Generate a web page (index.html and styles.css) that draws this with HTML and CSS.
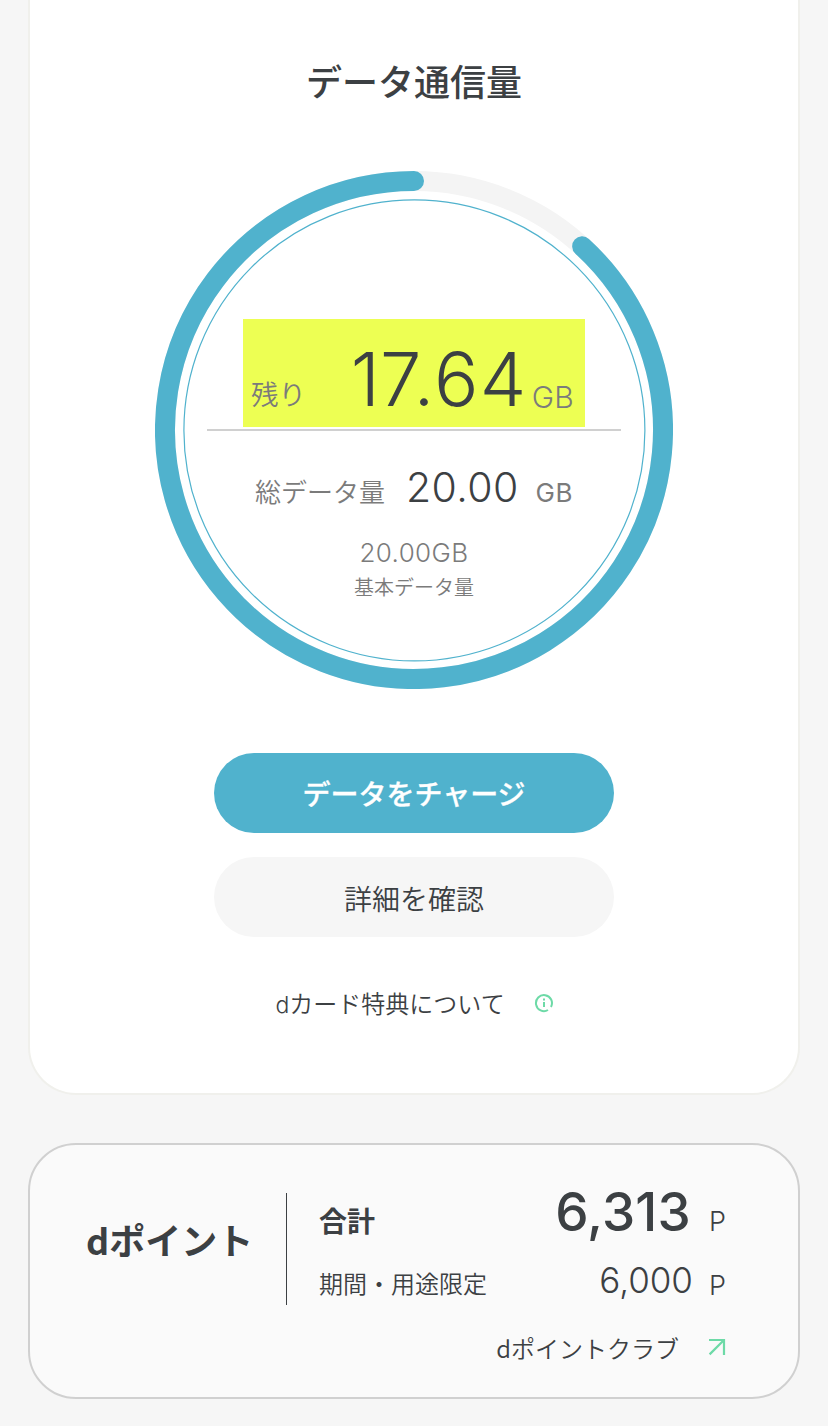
FILE: index.html
```html
<!DOCTYPE html>
<html lang="ja">
<head>
<meta charset="utf-8">
<title>データ通信量</title>
<link rel="stylesheet" href="styles.css">
</head>
<body>
<main class="page">
  <section class="usage-card">
    <h1 class="usage-title">データ通信量</h1>
    <div class="gauge">
      <svg class="gauge-ring" viewBox="0 0 518 518" fill="none">
        <circle cx="259" cy="259" r="249" stroke="#f4f4f4" stroke-width="20"/>
        <circle cx="259.4" cy="259.4" r="230.5" stroke="#50b2cd" stroke-width="1.2"/>
        <path d="M427.15 75.35A249 249 0 1 1 259 10" stroke="#50b2cd" stroke-width="20" stroke-linecap="round"/>
      </svg>
      <div class="gauge-body">
        <div class="remaining">
          <span class="remaining-label">残り</span>
          <span class="remaining-value"><span class="lead-digit">1</span>7.64</span>
          <span class="remaining-unit">GB</span>
        </div>
        <div class="gauge-line"></div>
        <div class="total">
          <span class="total-label">総データ量</span>
          <span class="total-value">20.00</span>
          <span class="total-unit">GB</span>
        </div>
        <div class="base-value"><span>20.00GB</span></div>
        <div class="base-label">基本データ量</div>
      </div>
    </div>
    <button class="btn btn-primary">データをチャージ</button>
    <button class="btn btn-plain">詳細を確認</button>
    <a class="benefit">
      <span class="benefit-text"><span class="latin-d">d</span>カード特典について</span>
      <svg class="benefit-icon" viewBox="0 0 20 20" fill="none" stroke="#6ddaa7" stroke-width="2">
        <path d="M14 17A8 8 0 1 1 17 13.9"/>
        <path d="M10 9v5M10 5.5v2"/>
      </svg>
    </a>
  </section>

  <section class="points-card">
    <h2 class="points-title">dポイント</h2>
    <div class="points-detail">
      <div class="row row-total">
        <span class="row-label">合計</span>
        <span class="row-value">6,313</span>
        <span class="row-unit">P</span>
      </div>
      <div class="row row-limited">
        <span class="row-label">期間・用途限定</span>
        <span class="row-value">6,000</span>
        <span class="row-unit">P</span>
      </div>
    </div>
    <a class="club">
      <span>dポイントクラブ</span>
      <svg class="club-icon" viewBox="0 0 18 18" fill="none" stroke="#6ddaa7" stroke-width="2.2">
        <path d="M1 2H16V17M16 2L1.6 16.4"/>
      </svg>
    </a>
  </section>
</main>
</body>
</html>
```
FILE: styles.css
```css
* { box-sizing: border-box; }
body {
  margin: 0;
  background: #f6f6f6;
  color: #3c4043;
  font-family: "Noto Sans CJK JP", sans-serif;
}
.page {
  height: 1426px;
  padding: 0 28px;
  overflow: hidden;
}
.usage-card {
  display: flex;
  flex-direction: column;
  align-items: center;
  height: 1095px;
  border: 2px solid #f0f0ec;
  border-top: 0;
  border-radius: 0 0 48px 48px;
  background: #fff;
}
.usage-title {
  margin: 54px 0 65px;
  font-size: 36px;
  font-weight: 500;
  line-height: 52px;
}
.gauge { display: grid; width: 518px; height: 518px; }
.gauge-ring, .gauge-body { grid-area: 1 / 1; }
.gauge-ring { width: 518px; height: 518px; }
.gauge-body {
  display: flex;
  flex-direction: column;
  align-items: center;
  padding-top: 148px;
  color: #7b7b7b;
}
.remaining {
  display: flex;
  align-items: flex-end;
  width: 342px;
  height: 108px;
  padding: 0 11px 0 8px;
  background: #edff53;
  line-height: 1;
}
.remaining-label { margin-bottom: 20px; font-size: 27.5px; font-weight: 350; }
.remaining-value {
  margin: 0 4px 11px auto;
  color: #3c4043;
  font-family: Inter, sans-serif;
  font-size: 74px;
  font-weight: 300;
  letter-spacing: 1.4px;
}
.lead-digit { letter-spacing: 0; }
.remaining-unit {
  margin-bottom: 15px;
  font-family: Inter, sans-serif;
  font-size: 30px;
  font-weight: 350;
  letter-spacing: 0.2px;
}
.gauge-line { width: 414px; height: 2px; margin-top: 2px; background: #d0d0d0; }
.total {
  display: flex;
  align-items: flex-end;
  width: 318px;
  height: 75px;
  line-height: 1;
}
.total-label { font-size: 26px; font-weight: 350; margin-bottom: 2px; }
.total-value {
  margin-left: 21px;
  color: #3c4043;
  font-family: Inter, sans-serif;
  font-size: 41px;
  font-weight: 300;
  letter-spacing: 0.4px;
  margin-bottom: -2px;
}
.total-unit {
  margin-left: auto;
  font-family: Inter, sans-serif;
  font-size: 26px;
  font-weight: 380;
  letter-spacing: 0.5px;
}
.base-value {
  margin-top: 31px;
  font-family: Inter, sans-serif;
  font-size: 26px;
  font-weight: 280;
  letter-spacing: 0.4px;
  line-height: 32px;
}
.base-label { font-size: 20px; font-weight: 350; line-height: 35px; }
.btn {
  width: 400px;
  height: 80px;
  padding: 0;
  border: 0;
  border-radius: 40px;
  font-family: inherit;
  font-size: 28px;
  line-height: 80px;
}
.btn-primary { margin-top: 64px; background: #50b2cd; color: #fff; font-weight: 500; -webkit-text-stroke: 0.3px #fff; }
.btn-plain { margin-top: 24px; padding-top: 1px; background: #f6f6f6; color: #3c4043; font-weight: 350; }
.benefit {
  display: flex;
  align-items: center;
  width: 279px;
  height: 40px;
  margin-top: 46px;
  padding-left: 1px;
  font-size: 24px;
  font-weight: 350;
  line-height: 38px;
}
.benefit-text { padding-top: 2px; }
.latin-d { font-family: Inter, sans-serif; font-weight: 300; font-size: 23px; }
.benefit-icon { width: 20px; height: 20px; margin-left: auto; }
.points-card {
  display: grid;
  grid-template-columns: 199px 1fr;
  grid-template-rows: 112px 1fr;
  height: 256px;
  margin-top: 48px;
  padding: 48px 72px 0 57px;
  border: 2px solid #d0d0d0;
  border-radius: 48px;
  background: #fafafa;
}
.points-title {
  margin: 0 0 0 -1px;
  font-size: 36px;
  font-weight: 700;
  line-height: 93px;
}
.points-detail {
  display: flex;
  flex-direction: column;
  padding-left: 32px;
  border-left: 1px solid #3c4043;
}
.row { display: flex; align-items: flex-end; line-height: 1; }
.row-label { flex: 1; }
.row-value, .row-unit { font-family: Inter, sans-serif; }
.row-unit { width: 17px; margin-left: 16px; font-size: 27px; }
.row-total { height: 45px; }
.row-total .row-label { margin-bottom: 4px; font-size: 28px; font-weight: 700; }
.row-total .row-value { margin: 0 2px -1px 0; font-size: 53px; font-weight: 550; letter-spacing: 0.2px; }
.row-total .row-unit { margin-bottom: 3px; font-weight: 350; }
.row-limited { height: 61px; }
.row-limited .row-label { font-size: 24px; font-weight: 350; margin-bottom: 4px; }
.row-limited .row-value { margin-bottom: 1px; font-size: 35px; font-weight: 280; }
.row-limited .row-unit { font-weight: 280; }
.club {
  grid-column: 1 / 3;
  display: flex;
  justify-content: flex-end;
  align-items: center;
  height: 34px;
  margin-top: 25px;
  gap: 29px;
  font-size: 24px;
  font-weight: 350;
}
.club-icon { width: 18px; height: 18px; }
```
